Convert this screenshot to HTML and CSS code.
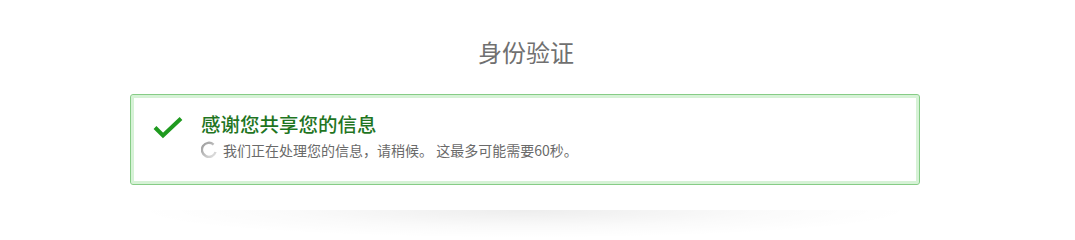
FILE: index.html
```html
<!DOCTYPE html>
<html lang="zh-CN">
<head>
<meta charset="utf-8">
<title>身份验证</title>
<link rel="stylesheet" href="styles.css">
</head>
<body>
<div class="page">
  <h1 class="title">身份验证</h1>
  <div class="notice">
    <div class="notice-icon">
      <svg width="32" height="24" viewBox="0 0 32 24" aria-hidden="true">
        <path d="M3 11.5 L11 19.5 L29 2.5" fill="none" stroke="#1f9a1f" stroke-width="4" stroke-linecap="butt" stroke-linejoin="miter"/>
      </svg>
    </div>
    <div class="notice-body">
      <div class="notice-heading">感谢您共享您的信息</div>
      <div class="notice-status">
        <svg class="spinner" width="16" height="18" viewBox="0 0 16 18" aria-hidden="true">
          <defs>
            <linearGradient id="sg" x1="0" y1="0" x2="1" y2="1">
              <stop offset="0" stop-color="#9a9a9a"/>
              <stop offset="1" stop-color="#e2e2e2"/>
            </linearGradient>
          </defs>
          <path d="M12.6 3.6 A7 7 0 1 0 14.6 11" fill="none" stroke="url(#sg)" stroke-width="2.4"/>
        </svg>
        <span>我们正在处理您的信息，请稍候。 这最多可能需要60秒。</span>
      </div>
    </div>
  </div>
  <div class="shadow"></div>
</div>
</body>
</html>
```
FILE: styles.css
```css
html, body {
  margin: 0;
  padding: 0;
  background: #ffffff;
}
body {
  font-family: "Noto Sans CJK SC", "Noto Sans", "Liberation Sans", sans-serif;
}
.page {
  width: 790px;
  margin-left: 130px;
  padding-top: 37px;
}
.title {
  margin: 0;
  font-size: 24px;
  line-height: 30px;
  font-weight: 400;
  color: #707070;
  text-align: center;
  padding-left: 2px;
}
.notice {
  margin-top: 27px;
  height: 91px;
  box-sizing: border-box;
  border: 1px solid #86cc86;
  border-radius: 3px;
  box-shadow: inset 0 0 0 3px #d6f2d6;
  display: flex;
  align-items: flex-start;
  padding: 20px 20px 0 21px;
  background: #ffffff;
}
.notice-icon {
  width: 32px;
  height: 24px;
  margin-right: 17px;
  margin-top: 1px;
}
.notice-icon svg {
  display: block;
}
.notice-body {
  display: flex;
  flex-direction: column;
}
.notice-heading {
  font-size: 19.5px;
  line-height: 24px;
  color: #1f751f;
  font-weight: 500;
  margin-top: -3px;
}
.notice-status {
  display: flex;
  align-items: center;
  margin-top: 4px;
  font-size: 14px;
  line-height: 20px;
  color: #6a6a6a;
}
.spinner {
  display: block;
  margin-right: 6px;
}
.shadow {
  margin: 25px auto 0;
  width: 780px;
  height: 28px;
  background: radial-gradient(ellipse 50% 100% at 50% 0%, rgba(0,0,0,0.07), rgba(0,0,0,0.02) 60%, rgba(0,0,0,0) 100%);
}
```
